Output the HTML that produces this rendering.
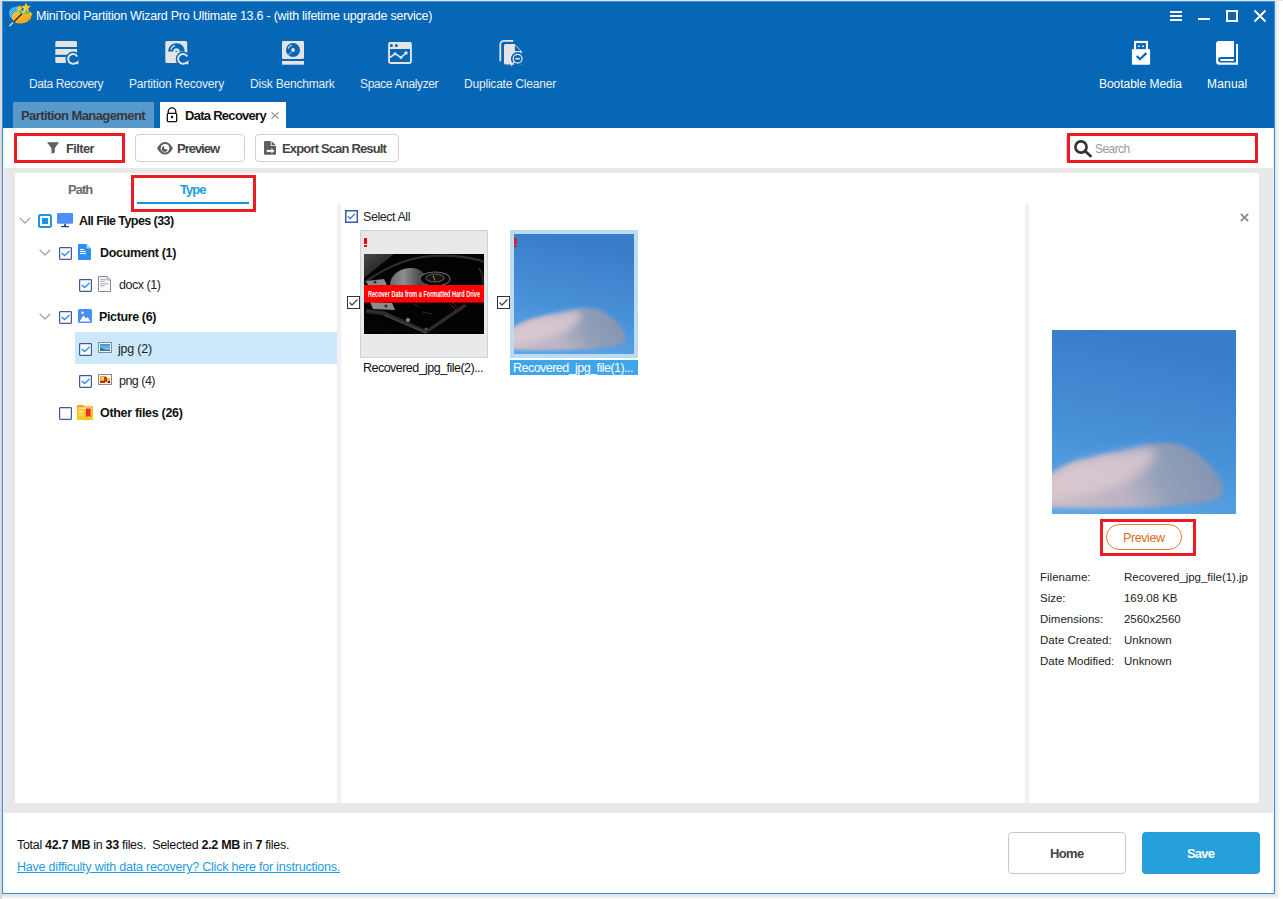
<!DOCTYPE html>
<html><head><meta charset="utf-8">
<style>
*{margin:0;padding:0;box-sizing:border-box}
html,body{width:1283px;height:899px;overflow:hidden;background:#fff;font-family:"Liberation Sans",sans-serif;position:relative}
.a{position:absolute}
.t{position:absolute;white-space:nowrap;line-height:1}
.tb{color:#e6edf4;font-size:12px}
.ico{position:absolute;overflow:visible}
.red{position:absolute;border:3px solid #ec1c24}
.btn{position:absolute;border:1px solid #d0d0d0;border-radius:4px;background:#fff}
.cb{position:absolute;width:13px;height:13px;border:1px solid #41599a;background:#fff}
</style></head><body>
<!-- window bg -->
<div class="a" style="left:2px;top:1px;width:1273px;height:893px;background:#fff"></div>
<!-- title / toolbar -->
<div class="a" style="left:2px;top:1px;width:1273px;height:127px;background:#0567b5"></div>
<div class="t" style="left:36px;top:10px;font-size:12.5px;letter-spacing:-0.24px;color:#fff">MiniTool Partition Wizard Pro Ultimate 13.6 - (with lifetime upgrade service)</div>
<!-- window controls -->
<div class="a" style="left:1170px;top:11px;width:12px;height:2px;background:#fff"></div>
<div class="a" style="left:1170px;top:15px;width:12px;height:2px;background:#fff"></div>
<div class="a" style="left:1170px;top:19px;width:12px;height:2px;background:#fff"></div>
<div class="a" style="left:1198px;top:18px;width:12px;height:2px;background:#fff"></div>
<div class="a" style="left:1226px;top:10px;width:12px;height:12px;border:2px solid #fff"></div>
<svg class="ico" style="left:1254px;top:10px" width="12" height="12" viewBox="0 0 12 12"><path d="M0.5 0.5L11.5 11.5M11.5 0.5L0.5 11.5" stroke="#fff" stroke-width="1.8"/></svg>

<!-- toolbar labels -->
<div class="t tb" style="left:29px;top:78px;letter-spacing:-0.41px">Data Recovery</div>
<div class="t tb" style="left:129px;top:78px;letter-spacing:-0.17px">Partition Recovery</div>
<div class="t tb" style="left:250px;top:78px;letter-spacing:-0.2px">Disk Benchmark</div>
<div class="t tb" style="left:360px;top:78px;letter-spacing:-0.37px">Space Analyzer</div>
<div class="t tb" style="left:464px;top:78px;letter-spacing:-0.2px">Duplicate Cleaner</div>
<div class="t tb" style="left:1099px;top:78px;letter-spacing:-0.03px;color:#fff">Bootable Media</div>
<div class="t tb" style="left:1207px;top:78px;letter-spacing:0.18px;color:#fff">Manual</div>

<!-- toolbar icons -->
<svg class="ico" style="left:50px;top:36px" width="34" height="34" viewBox="0 0 34 34">
 <path d="M5.3 6.5A1.5 1.5 0 0 1 6.8 5H25.5A1.5 1.5 0 0 1 27 6.5V11H5.3Z" fill="#e4e4e4"/>
 <rect x="5.3" y="13" width="21.7" height="5.8" fill="#e4e4e4"/>
 <path d="M5.3 21H15.8V27H6.8A1.5 1.5 0 0 1 5.3 25.5Z" fill="#e4e4e4"/>
 <circle cx="23" cy="22.9" r="7.3" fill="#0567b5"/><path d="M27.24 20.45A4.9 4.9 0 1 0 26.15 26.65" stroke="#e4e4e4" stroke-width="2" fill="none"/><path d="M28.6 24.2L28.3 28.6L24.3 27.4Z" fill="#e4e4e4"/>
</svg>
<svg class="ico" style="left:160px;top:36px" width="34" height="34" viewBox="0 0 34 34">
 <rect x="5.3" y="4.9" width="21.9" height="22" rx="1.5" fill="#e4e4e4"/>
 <path d="M8.1 15.5A8.35 8.35 0 0 1 24.8 15.5H19.6A3.15 3.15 0 0 0 13.3 15.5Z" fill="#0567b5"/>
 <path d="M11 13.2A5.6 5.6 0 0 1 14.6 9.6" stroke="#e4e4e4" stroke-width="1.2" fill="none" stroke-linecap="round"/>
 <ellipse cx="16.45" cy="15.2" rx="1.2" ry="0.5" fill="#0567b5"/>
 <circle cx="23" cy="22.9" r="7.3" fill="#0567b5"/><path d="M27.24 20.45A4.9 4.9 0 1 0 26.15 26.65" stroke="#e4e4e4" stroke-width="2" fill="none"/><path d="M28.6 24.2L28.3 28.6L24.3 27.4Z" fill="#e4e4e4"/>
</svg>
<svg class="ico" style="left:276px;top:36px" width="34" height="34" viewBox="0 0 34 34">
 <rect x="6" y="5.1" width="22" height="17.8" rx="1.3" fill="#e4e4e4"/>
 <circle cx="17" cy="14" r="7" fill="#0567b5"/>
 <circle cx="17" cy="14" r="1.9" fill="#e4e4e4"/>
 <path d="M12.3 12.2A5.3 5.3 0 0 1 15.5 9.2" stroke="#e4e4e4" stroke-width="1.1" fill="none" stroke-linecap="round"/>
 <path d="M15.3 16.2L11.8 19.8" stroke="#e4e4e4" stroke-width="0.9"/>
 <rect x="6" y="25" width="22" height="3.7" fill="#e4e4e4"/>
</svg>
<svg class="ico" style="left:383px;top:36px" width="34" height="34" viewBox="0 0 34 34">
 <rect x="6.05" y="6.85" width="21.9" height="20.2" rx="1.5" stroke="#e4e4e4" stroke-width="1.9" fill="none"/>
 <rect x="6" y="6" width="22" height="7" fill="#e4e4e4"/>
 <circle cx="8.4" cy="9.5" r="1.5" fill="#0567b5"/><circle cx="13.4" cy="9.5" r="1.5" fill="#0567b5"/>
 <path d="M7 21.5L12 17.8L18 21.4L23 17" stroke="#e4e4e4" stroke-width="1.6" fill="none" stroke-linejoin="round"/>
 <circle cx="12" cy="17.8" r="1.5" fill="#e4e4e4"/><circle cx="18" cy="21.6" r="1.5" fill="#e4e4e4"/><circle cx="23" cy="17" r="1.7" fill="#e4e4e4"/>
</svg>
<svg class="ico" style="left:494px;top:36px" width="34" height="34" viewBox="0 0 34 34">
 <path d="M6.3 24.6V8.5A3.6 3.6 0 0 1 9.9 4.9H18.6" stroke="#e4e4e4" stroke-width="1.8" fill="none" stroke-linecap="round"/>
 <path d="M11.5 8H20.6L27.7 15.3V28.5H11.5A1.5 1.5 0 0 1 10 27V9.5A1.5 1.5 0 0 1 11.5 8Z" fill="#e4e4e4"/>
 <path d="M20.9 9.2V15.1H26.6Z" fill="#0567b5"/>
 <circle cx="23.6" cy="22.7" r="6.7" fill="#0567b5"/>
 <circle cx="23.6" cy="22.7" r="4.4" stroke="#e4e4e4" stroke-width="1.3" fill="none"/>
 <rect x="21.3" y="22" width="4.6" height="1.5" fill="#e4e4e4"/>
 <path d="M20.3 25.9L17.4 29.3" stroke="#e4e4e4" stroke-width="1.4" stroke-linecap="round"/>
</svg>
<svg class="ico" style="left:1124px;top:36px" width="34" height="34" viewBox="0 0 34 34">
 <path d="M10 4.9H24V13.4H10Z" fill="#fff"/>
 <rect x="12.1" y="7" width="9.8" height="6.2" fill="#0567b5"/>
 <rect x="14.1" y="9.5" width="1.7" height="1.5" fill="#fff"/><rect x="18.2" y="9.5" width="1.7" height="1.5" fill="#fff"/>
 <path d="M7.9 13.2H26.1V27.7A1 1 0 0 1 25.1 28.7H8.9A1 1 0 0 1 7.9 27.7Z" fill="#fff"/>
 <path d="M12.8 19.9L16 23.3L22.3 17.1" stroke="#0567b5" stroke-width="2.2" fill="none"/>
</svg>
<svg class="ico" style="left:1210px;top:36px" width="34" height="34" viewBox="0 0 34 34">
 <path d="M9 4.9H24V21H10.8A2.75 2.75 0 0 0 10.8 26.5H26.1V7.9H28V28.7H9.5A3.5 3.5 0 0 1 6 25.2V8A3.1 3.1 0 0 1 9 4.9Z" fill="#fff"/>
 <rect x="10.2" y="23" width="13.8" height="2" rx="1" fill="#fff"/>
</svg>
<!-- app icon -->
<svg class="ico" style="left:0px;top:0px" width="40" height="40" viewBox="0 0 40 40">
 <defs><pattern id="hatch" width="2" height="2" patternUnits="userSpaceOnUse"><rect width="2" height="2" fill="#1f9cec"/><rect width="1" height="1" fill="#8ad2fa"/><rect x="1" y="1" width="1" height="1" fill="#5bbcf5"/></pattern>
 <linearGradient id="pie" x1="0" y1="0" x2="1" y2="1"><stop offset="0" stop-color="#fcc832"/><stop offset="1" stop-color="#f29a14"/></linearGradient></defs>
 <path d="M20.5 6.5C14.5 6 9.5 8 9 12C8.7 15 10 18 12.5 19.5L20.5 17Z" fill="url(#hatch)"/>
 <path d="M12 16.5C12 12.5 18 10.3 25 10.6C30 11 32 13.5 31.2 17C30.3 21 25.5 23.5 19.5 23.5C14.8 23.5 12 20.5 12 16.5Z" fill="url(#pie)"/>
 <path d="M19 11.2C24 10.2 29 10.6 31 13.2L30.2 15C27.5 13.6 23.5 13.2 19.8 13.6Z" fill="#66c046"/>
 <polygon points="26,2.5 27.4,5.8 30.8,6.1 28.2,8.4 29,11.7 26,9.9 23,11.7 23.8,8.4 21.2,6.1 24.6,5.8" fill="#fcca2c"/>
 <polygon points="19.6,4.8 20.6,7.1 23.1,7.4 21.2,9 21.8,11.4 19.6,10.1 17.4,11.4 18,9 16.1,7.4 18.6,7.1" fill="#fcca2c"/>
 <polygon points="30.5,11.5 31.2,13 32.8,13.2 31.6,14.2 32,15.8 30.5,15 29,15.8 29.4,14.2 28.2,13.2 29.8,13" fill="#f8c22a"/>
 <path d="M9.3 26.3L25.5 10.2" stroke="#d8d8d8" stroke-width="1.4"/>
 <path d="M13.2 22.4L22.2 13.5" stroke="#2a2a2a" stroke-width="1.4"/>
</svg>

<!-- tabs -->
<div class="a" style="left:13px;top:102px;width:141px;height:26px;background:#5899cc"></div>
<div class="t" style="left:21px;top:109px;font-size:13px;font-weight:bold;color:#36373a;letter-spacing:-0.59px">Partition Management</div>
<div class="a" style="left:160px;top:102px;width:126px;height:26px;background:#fff"></div>
<svg class="ico" style="left:166px;top:107px" width="12" height="16" viewBox="0 0 12 16"><path d="M2.2 6V4.7A3.8 3.8 0 0 1 9.8 4.7V6" stroke="#111" stroke-width="1.3" fill="none"/><rect x="1.3" y="6.3" width="9.4" height="8.4" rx="1.3" stroke="#111" stroke-width="1.3" fill="#fff"/><circle cx="6" cy="10" r="1.2" fill="#000"/></svg>
<div class="t" style="left:185px;top:109px;font-size:13px;font-weight:bold;color:#111;letter-spacing:-0.72px">Data Recovery</div>
<svg class="ico" style="left:271px;top:112px" width="8" height="7" viewBox="0 0 8 7"><path d="M0.5 0.3L7.5 6.7M7.5 0.3L0.5 6.7" stroke="#8a8a8a" stroke-width="1.1"/></svg>

<!-- toolbar row -->
<div class="btn" style="left:135px;top:134px;width:110px;height:28px"></div>
<div class="btn" style="left:255px;top:134px;width:144px;height:28px"></div>
<div class="btn" style="left:1066px;top:134px;width:191px;height:29px"></div>
<svg class="ico" style="left:47px;top:142px" width="12" height="12" viewBox="0 0 12 12"><path d="M0 0.2H12L7.8 6.2V10.5L4.5 11.8V6.2Z" fill="#5f5f5f"/></svg>
<div class="t" style="left:66px;top:142px;font-size:13px;font-weight:bold;color:#444;letter-spacing:-0.63px">Filter</div>
<svg class="ico" style="left:157px;top:142px" width="16" height="13" viewBox="0 0 16 13"><path d="M0 6.3C3 1.2 5.5 0 8 0S13 1.2 16 6.3C13 11.4 10.5 12.6 8 12.6S3 11.4 0 6.3Z" fill="#5f5f5f"/><circle cx="8" cy="6.3" r="4.3" fill="#fff"/><circle cx="7.6" cy="6.9" r="2.9" fill="#5f5f5f"/><circle cx="9.3" cy="5.0" r="2.4" fill="#fff"/></svg>
<div class="t" style="left:177px;top:142px;font-size:13px;font-weight:bold;color:#444;letter-spacing:-1.02px">Preview</div>
<svg class="ico" style="left:264px;top:141px" width="12" height="14" viewBox="0 0 12 14"><path d="M1 0H6.8V4.9H12V12.8A1 1 0 0 1 11 13.8H1A1 1 0 0 1 0 12.8V1A1 1 0 0 1 1 0Z" fill="#5f5f5f"/><path d="M7.6 0.2L11.9 4.2H7.6Z" fill="#5f5f5f"/><rect x="2.7" y="8.9" width="4.8" height="2" fill="#fff"/><path d="M7.3 7.3L10.6 9.9L7.3 12.5Z" fill="#fff"/></svg>
<div class="t" style="left:282px;top:142px;font-size:13px;font-weight:bold;color:#444;letter-spacing:-0.84px">Export Scan Result</div>
<svg class="ico" style="left:1074px;top:140px" width="18" height="17" viewBox="0 0 18 17"><circle cx="7" cy="7" r="5.6" stroke="#333" stroke-width="2.6" fill="none"/><path d="M11 11L16.5 16" stroke="#333" stroke-width="2.8" stroke-linecap="round"/></svg>
<div class="t" style="left:1095px;top:143px;font-size:12px;color:#999;letter-spacing:-0.57px">Search</div>

<!-- gray body -->
<div class="a" style="left:3px;top:168px;width:1271px;height:645px;background:#e8e8e8"></div>
<div class="a" style="left:15px;top:173px;width:1244px;height:630px;background:#fff"></div>
<!-- splitters -->
<div class="a" style="left:337px;top:204px;width:4px;height:599px;background:#f0f0f5"></div>
<div class="a" style="left:1025px;top:204px;width:4px;height:599px;background:#f0f0f5"></div>

<!-- Path/Type tabs -->
<div class="t" style="left:68px;top:183px;font-size:13px;font-weight:bold;color:#6b6b6b;letter-spacing:-0.97px">Path</div>
<div class="t" style="left:180px;top:183px;font-size:13px;font-weight:bold;color:#1a9ddf;letter-spacing:-0.99px">Type</div>
<div class="a" style="left:137px;top:202px;width:112px;height:2px;background:#1496d8"></div>

<!-- tree -->
<div class="a" style="left:75px;top:332px;width:262px;height:32px;background:#cce8fb"></div>
<svg class="ico" style="left:19px;top:217px" width="12" height="7" viewBox="0 0 12 7"><path d="M0.7 0.7L6 6L11.3 0.7" stroke="#a8a8a8" stroke-width="1.4" fill="none"/></svg>
<svg class="ico" style="left:38px;top:214px" width="14" height="14" viewBox="0 0 14 14"><rect x="1" y="1" width="12" height="12" rx="1.5" fill="#fff" stroke="#1e96dc" stroke-width="2"/><rect x="4" y="4" width="6" height="6" fill="#1e96dc"/></svg>
<svg class="ico" style="left:57px;top:213px" width="16" height="15" viewBox="0 0 16 15"><rect x="0" y="0" width="16" height="10.8" rx="1" fill="#4d8ef8"/><rect x="7.2" y="10.8" width="1.7" height="2.4" fill="#1c3c80"/><rect x="4" y="13" width="8" height="1.2" rx="0.5" fill="#1c3c80"/></svg>
<div class="t" style="left:79px;top:215px;font-size:12.5px;font-weight:bold;color:#111;letter-spacing:-0.57px">All File Types (33)</div>
<svg class="ico" style="left:39px;top:249px" width="12" height="7" viewBox="0 0 12 7"><path d="M0.7 0.7L6 6L11.3 0.7" stroke="#a8a8a8" stroke-width="1.4" fill="none"/></svg><svg class="ico" style="left:59px;top:247px" width="13" height="13" viewBox="0 0 13 13"><rect x="0.6" y="0.6" width="11.8" height="11.8" rx="0.8" fill="#fff" stroke="#41589a" stroke-width="1.2"/><path d="M3.1 6.4L5.6 8.6L10.2 4.2" stroke="#3a90e0" stroke-width="1.4" fill="none" stroke-linecap="round"/></svg>
<svg class="ico" style="left:78px;top:244px" width="13" height="16" viewBox="0 0 13 16"><path d="M1 0H8.5L13 4.5V15A1 1 0 0 1 12 16H1A1 1 0 0 1 0 15V1A1 1 0 0 1 1 0Z" fill="#2b90ee"/><path d="M8.5 0V4.5H13Z" fill="#a6d4fa"/><rect x="2" y="5" width="4" height="1.1" fill="#fff"/><rect x="2" y="7" width="6" height="1.1" fill="#fff"/><rect x="2" y="9" width="6" height="1.1" fill="#fff"/></svg>
<div class="t" style="left:100px;top:247px;font-size:12.5px;font-weight:bold;color:#111;letter-spacing:-0.32px">Document (1)</div>
<svg class="ico" style="left:79px;top:279px" width="13" height="13" viewBox="0 0 13 13"><rect x="0.6" y="0.6" width="11.8" height="11.8" rx="0.8" fill="#fff" stroke="#41589a" stroke-width="1.2"/><path d="M3.1 6.4L5.6 8.6L10.2 4.2" stroke="#3a90e0" stroke-width="1.4" fill="none" stroke-linecap="round"/></svg>
<svg class="ico" style="left:98px;top:276px" width="13" height="16" viewBox="0 0 13 16"><path d="M0.5 0.5H9L12.5 4V15.5H0.5Z" fill="#fafafa" stroke="#8a8a8a"/><path d="M9 0.5V4H12.5" fill="none" stroke="#8a8a8a" stroke-width="0.8"/><path d="M2.3 3.3H7.5M2.3 5.3H7M2.3 7.8H10.5M2.3 9.8H6.5" stroke="#8e9ab8" stroke-width="0.9"/></svg>
<div class="t" style="left:119px;top:279px;font-size:12.5px;color:#222;letter-spacing:-0.46px">docx (1)</div>
<svg class="ico" style="left:39px;top:313px" width="12" height="7" viewBox="0 0 12 7"><path d="M0.7 0.7L6 6L11.3 0.7" stroke="#a8a8a8" stroke-width="1.4" fill="none"/></svg><svg class="ico" style="left:59px;top:311px" width="13" height="13" viewBox="0 0 13 13"><rect x="0.6" y="0.6" width="11.8" height="11.8" rx="0.8" fill="#fff" stroke="#41589a" stroke-width="1.2"/><path d="M3.1 6.4L5.6 8.6L10.2 4.2" stroke="#3a90e0" stroke-width="1.4" fill="none" stroke-linecap="round"/></svg>
<svg class="ico" style="left:78px;top:309px" width="14" height="14" viewBox="0 0 14 14"><rect width="14" height="14" rx="1.5" fill="#4b8ef0"/><path d="M1.5 12.5L5.5 6.5L8 9.5L9.5 8L12.5 12.5Z" fill="#fff"/><circle cx="4.5" cy="3.8" r="1.2" fill="#fff"/></svg>
<div class="t" style="left:99px;top:311px;font-size:12.5px;font-weight:bold;color:#111;letter-spacing:-0.375px">Picture (6)</div>
<svg class="ico" style="left:79px;top:343px" width="13" height="13" viewBox="0 0 13 13"><rect x="0.6" y="0.6" width="11.8" height="11.8" rx="0.8" fill="#fff" stroke="#41589a" stroke-width="1.2"/><path d="M3.1 6.4L5.6 8.6L10.2 4.2" stroke="#3a90e0" stroke-width="1.4" fill="none" stroke-linecap="round"/></svg>
<svg class="ico" style="left:98px;top:342px" width="14" height="11" viewBox="0 0 14 11"><rect x="0.5" y="0.5" width="13" height="10" fill="#f4f8fc" stroke="#7890a8"/><defs><linearGradient id="jg" x1="0" y1="0" x2="0" y2="1"><stop offset="0" stop-color="#3d8ee0"/><stop offset="1" stop-color="#9fd0f0"/></linearGradient></defs><rect x="2" y="2" width="10" height="7" fill="url(#jg)"/><path d="M2 9V5.5L5 6.5L8 8L12 7.5V9Z" fill="#2f7a7a"/></svg>
<div class="t" style="left:118px;top:343px;font-size:12.5px;color:#222;letter-spacing:-0.2px">jpg (2)</div>
<svg class="ico" style="left:79px;top:375px" width="13" height="13" viewBox="0 0 13 13"><rect x="0.6" y="0.6" width="11.8" height="11.8" rx="0.8" fill="#fff" stroke="#41589a" stroke-width="1.2"/><path d="M3.1 6.4L5.6 8.6L10.2 4.2" stroke="#3a90e0" stroke-width="1.4" fill="none" stroke-linecap="round"/></svg>
<svg class="ico" style="left:98px;top:374px" width="14" height="11" viewBox="0 0 14 11"><rect x="0.5" y="0.5" width="13" height="10" fill="#fff" stroke="#8a8a8a"/><rect x="2" y="2" width="6" height="6" fill="#f0a020"/><rect x="3" y="3" width="3" height="3" fill="#f8d040"/><rect x="6" y="3" width="3" height="5" fill="#c8302a"/><rect x="9" y="4" width="3" height="5" fill="#f0c030"/><rect x="2" y="7" width="5" height="2" fill="#b82a20"/><rect x="10" y="7" width="2" height="2" fill="#801010"/></svg>
<div class="t" style="left:119px;top:375px;font-size:12.5px;color:#222;letter-spacing:-0.515px">png (4)</div>
<svg class="ico" style="left:59px;top:407px" width="13" height="13" viewBox="0 0 13 13"><rect x="0.6" y="0.6" width="11.8" height="11.8" rx="0.8" fill="#fff" stroke="#41589a" stroke-width="1.2"/></svg>
<svg class="ico" style="left:77px;top:405px" width="16" height="15" viewBox="0 0 16 15"><path d="M0 1A1 1 0 0 1 1 0H6L7.5 1.3H15A1 1 0 0 1 16 2.3V14A1 1 0 0 1 15 15H1A1 1 0 0 1 0 14Z" fill="#f2a614"/><rect x="0" y="3.6" width="16" height="11.4" fill="#f8c824"/><rect x="1.2" y="2.6" width="13.6" height="1" fill="#fff"/><rect x="2" y="6.3" width="4.5" height="1.1" fill="#fff"/><rect x="2" y="9.2" width="4.5" height="1" fill="#fde7a0"/><path d="M9 3.6V12.3L11.2 10.8L13.6 12.3V3.6Z" fill="#f42a2a"/></svg>
<div class="t" style="left:100px;top:407px;font-size:12.5px;font-weight:bold;color:#111;letter-spacing:-0.314px">Other files (26)</div>

<!-- thumbnails -->
<svg class="ico" style="left:345px;top:210px" width="13" height="13" viewBox="0 0 13 13"><rect x="0.75" y="0.75" width="11.5" height="11.5" fill="#fff" stroke="#41599e" stroke-width="1.5"/><path d="M2.8 6.3L5.2 8.6L10 3.8" stroke="#3a90e0" stroke-width="1.5" fill="none"/></svg>
<div class="t" style="left:363px;top:211px;font-size:12.5px;color:#222;letter-spacing:-0.44px">Select All</div>
<div class="a" style="left:360px;top:230px;width:128px;height:128px;background:#e9e9e9;border:1px solid #c3d6de"></div>
<div class="a" style="left:364px;top:238px;width:3px;height:6px;background:#f00"></div>
<div class="a" style="left:364px;top:245px;width:3px;height:2px;background:#f00"></div>
<svg class="ico" style="left:364px;top:254px" width="120" height="80" viewBox="0 0 120 80">
 <defs><linearGradient id="tlg" x1="0" y1="0" x2="1" y2="1"><stop offset="0" stop-color="#4a4a4a"/><stop offset="1" stop-color="#101010"/></linearGradient>
 <linearGradient id="plg" x1="0" y1="0.5" x2="1" y2="0.5"><stop offset="0" stop-color="#6a6a6a"/><stop offset="0.4" stop-color="#8e8e8e"/><stop offset="1" stop-color="#3a3a3a"/></linearGradient></defs>
 <rect width="120" height="80" fill="#030303"/>
 <path d="M0 0H30L0 24Z" fill="url(#tlg)"/>
 <path d="M0 29C12 20 30 8 58 3C80 0 105 2 120 8" stroke="#2e2e2e" stroke-width="2.2" fill="none"/>
 <path d="M115 14C119 20 120 26 118 32" stroke="#2a2a2a" stroke-width="1.5" fill="none"/>
 <path d="M26 31C26 22 34 15 45 14C52 13.5 58 16 60 20L60 31Z" fill="url(#plg)"/>
 <ellipse cx="71" cy="25" rx="15" ry="7" fill="#080808" stroke="#6a6a6a" stroke-width="1.1"/>
 <ellipse cx="71" cy="24" rx="9" ry="4" fill="#151515" stroke="#8a8a8a" stroke-width="0.7"/>
 <path d="M69 21.5L71 26.5" stroke="#d89a20" stroke-width="0.9"/>
 <path d="M2 27L20 25L23 31L4 31Z" fill="#8a8a8a"/>
 <circle cx="11" cy="28" r="1.6" fill="#333"/>
 <path d="M6 48L28 49L31 56L9 55Z" fill="#8c8c8c"/>
 <circle cx="22" cy="52" r="1.6" fill="#333"/>
 <path d="M2 55L20 57L62 76L100 50L103 52L62 80L18 61L2 59Z" fill="#2c2c2c"/>
 <path d="M20 61L62 79" stroke="#4a4a4a" stroke-width="1"/>
 <circle cx="44" cy="66" r="1.8" fill="#cfcfcf"/><circle cx="44" cy="66" r="0.8" fill="#222"/>
 <circle cx="62" cy="75" r="1.5" fill="#555"/>
 <path d="M50 50L56 53M58 58L68 60" stroke="#2a2a2a" stroke-width="1"/>
 <path d="M86 50L92 56M88 48L94 54" stroke="#6a2a10" stroke-width="0.8"/>
 <path d="M0 65L30 78" stroke="#3a0a0a" stroke-width="0.8" stroke-dasharray="1 2"/>
 <rect x="0" y="31" width="120" height="17.6" fill="#f00"/>
 <text x="60" y="43" text-anchor="middle" font-family="Liberation Sans" font-weight="bold" font-size="9.5" fill="#fff" textLength="112" lengthAdjust="spacingAndGlyphs">Recover Data from a Formatted Hard Drive</text>
</svg>
<svg class="ico" style="left:347px;top:296px" width="13" height="13" viewBox="0 0 13 13"><rect x="0.5" y="0.5" width="12" height="12" fill="#fff" stroke="#333"/><path d="M2.5 6.5L5 9L10.5 3.5" stroke="#444" stroke-width="1.3" fill="none"/></svg>
<div class="t" style="left:363px;top:362px;font-size:12.5px;color:#111;letter-spacing:-0.53px">Recovered_jpg_file(2)...</div>
<div class="a" style="left:510px;top:230px;width:128px;height:128px;background:#bcdcf0"></div>
<svg class="ico" style="left:514px;top:234px" width="120" height="120" viewBox="0 0 100 100" preserveAspectRatio="none"><defs><linearGradient id="sga" x1="0.2" y1="0" x2="0" y2="1"><stop offset="0" stop-color="#3a7dc8"/><stop offset="0.55" stop-color="#4891d9"/><stop offset="1" stop-color="#5ea8e6"/></linearGradient>
<linearGradient id="cga" x1="0" y1="0.6" x2="1" y2="0.4"><stop offset="0" stop-color="#cdbcc6"/><stop offset="0.4" stop-color="#b9b3c4"/><stop offset="0.65" stop-color="#929fb8"/><stop offset="1" stop-color="#8294b2"/></linearGradient>
<filter id="bla" x="-0.2" y="-0.5" width="1.4" height="2"><feGaussianBlur stdDeviation="1.3"/></filter>
<filter id="bl2a" x="-0.3" y="-0.5" width="1.6" height="2"><feGaussianBlur stdDeviation="3"/></filter><clipPath id="cpa"><rect width="100" height="100"/></clipPath></defs>
<rect width="100" height="100" fill="url(#sga)"/>
<g clip-path="url(#cpa)"><path d="M-5 81C1 77 6 74 11 72C15 70 19 70.5 23 69C28 67 34 67 40 65.5C46 64 52 62 58 61.5C66 60.5 74 63 81 69C87 74 92 80 93 86C93.5 90 90 92.5 84 93.5C74 95 62 96 48 96.5C32 97 16 97 4 96.5C0 96.3 -3 96 -5 95.5Z" fill="url(#cga)" filter="url(#bla)"/><path d="M-5 84C4 76 14 72 24 70C34 68 44 65 54 64C58 66 56 72 48 78C38 85 22 89 8 91C2 92 -3 91 -5 90Z" fill="#e0ccd2" opacity="0.75" filter="url(#bl2a)"/></g></svg>
<div class="a" style="left:514px;top:238px;width:3px;height:6px;background:#d8203a"></div>
<div class="a" style="left:514px;top:245px;width:3px;height:2px;background:#d8203a"></div>
<svg class="ico" style="left:497px;top:296px" width="13" height="13" viewBox="0 0 13 13"><rect x="0.5" y="0.5" width="12" height="12" fill="#fff" stroke="#333"/><path d="M2.5 6.5L5 9L10.5 3.5" stroke="#444" stroke-width="1.3" fill="none"/></svg>
<div class="a" style="left:510px;top:360px;width:128px;height:15px;background:#3fa6ee"></div>
<div class="t" style="left:513px;top:362px;font-size:12.5px;color:#fff;letter-spacing:-0.53px">Recovered_jpg_file(1)...</div>

<!-- preview pane -->
<svg class="ico" style="left:1240px;top:213px" width="9" height="9" viewBox="0 0 9 9"><path d="M0.8 0.8L8.2 8.2M8.2 0.8L0.8 8.2" stroke="#8a8a8a" stroke-width="1.8"/></svg>
<svg class="ico" style="left:1052px;top:330px" width="184" height="184" viewBox="0 0 100 100" preserveAspectRatio="none"><defs><linearGradient id="sgb" x1="0.2" y1="0" x2="0" y2="1"><stop offset="0" stop-color="#3a7dc8"/><stop offset="0.55" stop-color="#4891d9"/><stop offset="1" stop-color="#5ea8e6"/></linearGradient>
<linearGradient id="cgb" x1="0" y1="0.6" x2="1" y2="0.4"><stop offset="0" stop-color="#cdbcc6"/><stop offset="0.4" stop-color="#b9b3c4"/><stop offset="0.65" stop-color="#929fb8"/><stop offset="1" stop-color="#8294b2"/></linearGradient>
<filter id="blb" x="-0.2" y="-0.5" width="1.4" height="2"><feGaussianBlur stdDeviation="1.3"/></filter>
<filter id="bl2b" x="-0.3" y="-0.5" width="1.6" height="2"><feGaussianBlur stdDeviation="3"/></filter><clipPath id="cpb"><rect width="100" height="100"/></clipPath></defs>
<rect width="100" height="100" fill="url(#sgb)"/>
<g clip-path="url(#cpb)"><path d="M-5 81C1 77 6 74 11 72C15 70 19 70.5 23 69C28 67 34 67 40 65.5C46 64 52 62 58 61.5C66 60.5 74 63 81 69C87 74 92 80 93 86C93.5 90 90 92.5 84 93.5C74 95 62 96 48 96.5C32 97 16 97 4 96.5C0 96.3 -3 96 -5 95.5Z" fill="url(#cgb)" filter="url(#blb)"/><path d="M-5 84C4 76 14 72 24 70C34 68 44 65 54 64C58 66 56 72 48 78C38 85 22 89 8 91C2 92 -3 91 -5 90Z" fill="#e0ccd2" opacity="0.75" filter="url(#bl2b)"/></g></svg>
<div class="a" style="left:1106px;top:524px;width:76px;height:26px;border:1px solid #e8782e;border-radius:13px"></div>
<div class="t" style="left:1123px;top:532px;font-size:12.5px;color:#e06a22;letter-spacing:-0.4px">Preview</div>
<div class="t" style="left:1040px;top:567px;font-size:11.5px;color:#222;line-height:21px;letter-spacing:0px">Filename:<br>Size:<br>Dimensions:<br>Date Created:<br>Date Modified:</div>
<div class="t" style="left:1124px;top:567px;font-size:11.5px;color:#222;line-height:21px;letter-spacing:-0.03px;width:124px;overflow:hidden">Recovered_jpg_file(1).jpg<br>169.08 KB<br>2560x2560<br>Unknown<br>Unknown</div>

<!-- red boxes -->
<div class="red" style="left:14px;top:133px;width:111px;height:30px"></div>
<div class="red" style="left:131px;top:175px;width:125px;height:37px"></div>
<div class="red" style="left:1067px;top:133px;width:191px;height:30px"></div>
<div class="red" style="left:1100px;top:519px;width:96px;height:37px"></div>

<!-- bottom -->
<div class="t" style="left:17px;top:839px;font-size:12.5px;color:#111;letter-spacing:-0.31px">Total <b>42.7 MB</b> in <b>33</b> files.&nbsp; Selected <b>2.2 MB</b> in <b>7</b> files.</div>
<div class="t" style="left:17px;top:861px;font-size:12.5px;color:#1e9be0;text-decoration:underline;letter-spacing:-0.214px">Have difficulty with data recovery? Click here for instructions.</div>
<div class="btn" style="left:1008px;top:832px;width:118px;height:42px;border-color:#c8c8c8"></div>
<div class="t" style="left:1050px;top:847px;font-size:13px;font-weight:bold;color:#444;letter-spacing:-0.63px">Home</div>
<div class="a" style="left:1142px;top:832px;width:118px;height:42px;border-radius:4px;background:#26a0da"></div>
<div class="t" style="left:1187px;top:847px;font-size:13px;font-weight:bold;color:#fff;letter-spacing:-0.8px">Save</div>

<!-- outside shadow -->
<div class="a" style="left:0;top:0;width:1283px;height:1px;background:#eee5dd"></div>
<div class="a" style="left:0;top:0;width:1px;height:899px;background:#dcdcdc"></div>
<div class="a" style="left:1px;top:1px;width:1px;height:898px;background:#ddd6d0"></div>
<div class="a" style="left:1275px;top:1px;width:1px;height:895px;background:#ebe5e1"></div>
<div class="a" style="left:1276px;top:1px;width:3px;height:897px;background:linear-gradient(90deg,#ececec,#f6f6f6)"></div>
<div class="a" style="left:2px;top:894px;width:1274px;height:1px;background:#e8e1dc"></div>
<div class="a" style="left:2px;top:895px;width:1276px;height:3px;background:linear-gradient(180deg,#e4e4e4,#f4f4f8)"></div>
<!-- inner light lines -->
<div class="a" style="left:3px;top:128px;width:1px;height:765px;background:#f8f0ec"></div>
<div class="a" style="left:1273px;top:128px;width:1px;height:765px;background:#f8f0ec"></div>
<!-- window border -->
<div class="a" style="left:2px;top:1px;width:1273px;height:893px;border:1px solid #2a93ec;pointer-events:none"></div>
</body></html>
